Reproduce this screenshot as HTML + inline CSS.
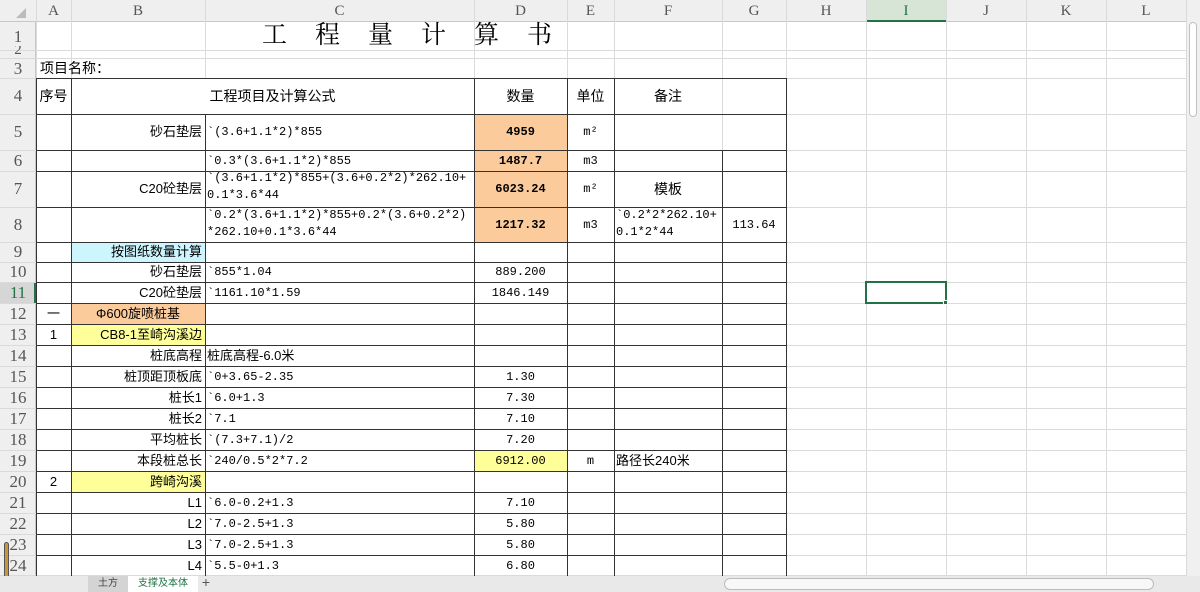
<!DOCTYPE html><html><head><meta charset="utf-8"><style>
body{margin:0;width:1200px;height:592px;overflow:hidden;background:#fff;position:relative;font-family:"Liberation Mono","Noto Sans CJK SC",monospace;font-size:12px;color:#000}
div{position:absolute;box-sizing:border-box}
.g{background:#dadada}.d{background:#333}
.t{white-space:nowrap;line-height:20px}
.cj{font-family:"Liberation Sans","Noto Sans CJK SC",sans-serif;font-size:13px}
.hd{font-family:"Liberation Serif","Noto Serif CJK SC",serif;font-size:15px;color:#555;text-align:center}
.r{text-align:right}.c{text-align:center}
b{font-weight:bold}
</style></head><body>
<div style="left:0;top:0;width:1186px;height:22px;background:#efefef;border-bottom:1px solid #c8c8c8"></div>
<div style="left:0;top:22px;width:36px;height:554px;background:#efefef;border-right:1px solid #c8c8c8"></div>
<div style="left:16px;top:8px;width:0;height:0;border-left:10px solid transparent;border-bottom:10px solid #bbb"></div>
<div style="left:866px;top:0;width:80px;height:22px;background:#d6e5d6;border-bottom:2px solid #217346"></div>
<div style="left:0;top:282px;width:36px;height:21px;background:#d6d6d6;border-right:2px solid #217346"></div>
<div style="left:474px;top:114px;width:93px;height:128px;background:#fbcb9c"></div>
<div style="left:71px;top:242px;width:134px;height:20px;background:#ccf5fd"></div>
<div style="left:71px;top:303px;width:134px;height:21px;background:#fbcb9c"></div>
<div style="left:71px;top:324px;width:134px;height:21px;background:#ffff99"></div>
<div style="left:474px;top:450px;width:93px;height:21px;background:#ffff99"></div>
<div style="left:71px;top:471px;width:134px;height:21px;background:#ffff99"></div>
<div class="g" style="left:36px;top:0;width:1px;height:576px"></div>
<div class="g" style="left:71px;top:0;width:1px;height:576px"></div>
<div class="g" style="left:205px;top:0;width:1px;height:78px"></div>
<div class="g" style="left:205px;top:114px;width:1px;height:462px"></div>
<div class="g" style="left:474px;top:0;width:1px;height:576px"></div>
<div class="g" style="left:567px;top:0;width:1px;height:576px"></div>
<div class="g" style="left:614px;top:0;width:1px;height:576px"></div>
<div class="g" style="left:722px;top:0;width:1px;height:576px"></div>
<div class="g" style="left:786px;top:0;width:1px;height:576px"></div>
<div class="g" style="left:866px;top:0;width:1px;height:576px"></div>
<div class="g" style="left:946px;top:0;width:1px;height:576px"></div>
<div class="g" style="left:1026px;top:0;width:1px;height:576px"></div>
<div class="g" style="left:1106px;top:0;width:1px;height:576px"></div>
<div class="g" style="left:1186px;top:0;width:1px;height:576px"></div>
<div class="g" style="left:0;top:50px;width:1186px;height:1px"></div>
<div class="g" style="left:0;top:58px;width:1186px;height:1px"></div>
<div class="g" style="left:0;top:78px;width:1186px;height:1px"></div>
<div class="g" style="left:0;top:114px;width:1186px;height:1px"></div>
<div class="g" style="left:0;top:150px;width:1186px;height:1px"></div>
<div class="g" style="left:0;top:171px;width:1186px;height:1px"></div>
<div class="g" style="left:0;top:207px;width:1186px;height:1px"></div>
<div class="g" style="left:0;top:242px;width:1186px;height:1px"></div>
<div class="g" style="left:0;top:262px;width:1186px;height:1px"></div>
<div class="g" style="left:0;top:282px;width:1186px;height:1px"></div>
<div class="g" style="left:0;top:303px;width:1186px;height:1px"></div>
<div class="g" style="left:0;top:324px;width:1186px;height:1px"></div>
<div class="g" style="left:0;top:345px;width:1186px;height:1px"></div>
<div class="g" style="left:0;top:366px;width:1186px;height:1px"></div>
<div class="g" style="left:0;top:387px;width:1186px;height:1px"></div>
<div class="g" style="left:0;top:408px;width:1186px;height:1px"></div>
<div class="g" style="left:0;top:429px;width:1186px;height:1px"></div>
<div class="g" style="left:0;top:450px;width:1186px;height:1px"></div>
<div class="g" style="left:0;top:471px;width:1186px;height:1px"></div>
<div class="g" style="left:0;top:492px;width:1186px;height:1px"></div>
<div class="g" style="left:0;top:513px;width:1186px;height:1px"></div>
<div class="g" style="left:0;top:534px;width:1186px;height:1px"></div>
<div class="g" style="left:0;top:555px;width:1186px;height:1px"></div>
<div class="g" style="left:0;top:575px;width:1186px;height:1px"></div>
<div class="d" style="left:36px;top:78px;width:750px;height:1px"></div>
<div class="d" style="left:36px;top:114px;width:750px;height:1px"></div>
<div class="d" style="left:36px;top:150px;width:750px;height:1px"></div>
<div class="d" style="left:36px;top:171px;width:750px;height:1px"></div>
<div class="d" style="left:36px;top:207px;width:750px;height:1px"></div>
<div class="d" style="left:36px;top:242px;width:750px;height:1px"></div>
<div class="d" style="left:36px;top:262px;width:750px;height:1px"></div>
<div class="d" style="left:36px;top:282px;width:750px;height:1px"></div>
<div class="d" style="left:36px;top:303px;width:750px;height:1px"></div>
<div class="d" style="left:36px;top:324px;width:750px;height:1px"></div>
<div class="d" style="left:36px;top:345px;width:750px;height:1px"></div>
<div class="d" style="left:36px;top:366px;width:750px;height:1px"></div>
<div class="d" style="left:36px;top:387px;width:750px;height:1px"></div>
<div class="d" style="left:36px;top:408px;width:750px;height:1px"></div>
<div class="d" style="left:36px;top:429px;width:750px;height:1px"></div>
<div class="d" style="left:36px;top:450px;width:750px;height:1px"></div>
<div class="d" style="left:36px;top:471px;width:750px;height:1px"></div>
<div class="d" style="left:36px;top:492px;width:750px;height:1px"></div>
<div class="d" style="left:36px;top:513px;width:750px;height:1px"></div>
<div class="d" style="left:36px;top:534px;width:750px;height:1px"></div>
<div class="d" style="left:36px;top:555px;width:750px;height:1px"></div>
<div class="d" style="left:71px;top:78px;width:1px;height:498px"></div>
<div class="d" style="left:205px;top:114px;width:1px;height:462px"></div>
<div class="d" style="left:474px;top:78px;width:1px;height:498px"></div>
<div class="d" style="left:567px;top:78px;width:1px;height:498px"></div>
<div class="d" style="left:614px;top:78px;width:1px;height:498px"></div>
<div class="d" style="left:722px;top:150px;width:1px;height:426px"></div>
<div class="d" style="left:786px;top:78px;width:1px;height:498px"></div>
<div class="d" style="left:36px;top:78px;width:1px;height:498px"></div>
<div class="t hd" style="left:36px;top:1px;width:35px">A</div>
<div class="t hd" style="left:71px;top:1px;width:134px">B</div>
<div class="t hd" style="left:205px;top:1px;width:269px">C</div>
<div class="t hd" style="left:474px;top:1px;width:93px">D</div>
<div class="t hd" style="left:567px;top:1px;width:47px">E</div>
<div class="t hd" style="left:614px;top:1px;width:108px">F</div>
<div class="t hd" style="left:722px;top:1px;width:64px">G</div>
<div class="t hd" style="left:786px;top:1px;width:80px">H</div>
<div class="t hd" style="left:866px;top:1px;width:80px;color:#217346">I</div>
<div class="t hd" style="left:946px;top:1px;width:80px">J</div>
<div class="t hd" style="left:1026px;top:1px;width:80px">K</div>
<div class="t hd" style="left:1106px;top:1px;width:80px">L</div>
<div class="t hd" style="left:0;top:27px;width:36px;font-size:17px">1</div>
<div class="t hd" style="left:0;top:46px;width:36px;height:12px;overflow:hidden;line-height:8px">2</div>
<div class="t hd" style="left:0;top:59px;width:36px;font-size:17px">3</div>
<div class="t hd" style="left:0;top:86px;width:36px;font-size:17px">4</div>
<div class="t hd" style="left:0;top:122px;width:36px;font-size:17px">5</div>
<div class="t hd" style="left:0;top:151px;width:36px;font-size:17px">6</div>
<div class="t hd" style="left:0;top:179px;width:36px;font-size:17px">7</div>
<div class="t hd" style="left:0;top:215px;width:36px;font-size:17px">8</div>
<div class="t hd" style="left:0;top:242px;width:36px;font-size:17px">9</div>
<div class="t hd" style="left:0;top:262px;width:36px;font-size:17px">10</div>
<div class="t hd" style="left:0;top:283px;width:36px;font-size:17px;color:#217346">11</div>
<div class="t hd" style="left:0;top:304px;width:36px;font-size:17px">12</div>
<div class="t hd" style="left:0;top:325px;width:36px;font-size:17px">13</div>
<div class="t hd" style="left:0;top:346px;width:36px;font-size:17px">14</div>
<div class="t hd" style="left:0;top:367px;width:36px;font-size:17px">15</div>
<div class="t hd" style="left:0;top:388px;width:36px;font-size:17px">16</div>
<div class="t hd" style="left:0;top:409px;width:36px;font-size:17px">17</div>
<div class="t hd" style="left:0;top:430px;width:36px;font-size:17px">18</div>
<div class="t hd" style="left:0;top:451px;width:36px;font-size:17px">19</div>
<div class="t hd" style="left:0;top:472px;width:36px;font-size:17px">20</div>
<div class="t hd" style="left:0;top:493px;width:36px;font-size:17px">21</div>
<div class="t hd" style="left:0;top:514px;width:36px;font-size:17px">22</div>
<div class="t hd" style="left:0;top:535px;width:36px;font-size:17px">23</div>
<div class="t hd" style="left:0;top:556px;width:36px;font-size:17px">24</div>
<div style="left:4px;top:542px;width:5px;height:36px;background:#c8963c;border:1px solid #555;border-radius:3px"></div>
<div class="t" style="left:262px;top:22px;height:28px;line-height:28px;font-family:'Liberation Serif','Noto Serif CJK SC',serif;font-size:25px;letter-spacing:28px">工程量计算书</div>
<div class="t cj" style="left:40px;top:58px;font-size:14px">项目名称：</div>
<div class="t cj c" style="left:36px;top:86px;width:35px;font-size:14px">序号</div>
<div class="t cj c" style="left:71px;top:86px;width:403px;font-size:14px">工程项目及计算公式</div>
<div class="t cj c" style="left:474px;top:86px;width:93px;font-size:14px">数量</div>
<div class="t cj c" style="left:567px;top:86px;width:47px;font-size:14px">单位</div>
<div class="t cj c" style="left:614px;top:86px;width:108px;font-size:14px">备注</div>
<div class="t cj r" style="left:71px;top:122px;width:131px">砂石垫层</div>
<div class="t" style="left:207px;top:122px">`(3.6+1.1*2)*855</div>
<div class="t c" style="left:474px;top:122px;width:93px"><b>4959</b></div>
<div class="t c" style="left:567px;top:122px;width:47px">m²</div>
<div class="t" style="left:207px;top:151px">`0.3*(3.6+1.1*2)*855</div>
<div class="t c" style="left:474px;top:151px;width:93px"><b>1487.7</b></div>
<div class="t c" style="left:567px;top:151px;width:47px">m3</div>
<div class="t cj r" style="left:71px;top:179px;width:131px">C20砼垫层</div>
<div class="t" style="left:207px;top:170px;line-height:17px">`(3.6+1.1*2)*855+(3.6+0.2*2)*262.10+<br>0.1*3.6*44</div>
<div class="t c" style="left:474px;top:179px;width:93px"><b>6023.24</b></div>
<div class="t c" style="left:567px;top:179px;width:47px">m²</div>
<div class="t cj c" style="left:614px;top:179px;width:108px;font-size:14px">模板</div>
<div class="t" style="left:207px;top:207px;line-height:17px">`0.2*(3.6+1.1*2)*855+0.2*(3.6+0.2*2)<br>*262.10+0.1*3.6*44</div>
<div class="t c" style="left:474px;top:215px;width:93px"><b>1217.32</b></div>
<div class="t c" style="left:567px;top:215px;width:47px">m3</div>
<div class="t" style="left:616px;top:207px;line-height:17px">`0.2*2*262.10+<br>0.1*2*44</div>
<div class="t c" style="left:722px;top:215px;width:64px">113.64</div>
<div class="t cj r" style="left:71px;top:242px;width:131px">按图纸数量计算</div>
<div class="t cj r" style="left:71px;top:262px;width:131px">砂石垫层</div>
<div class="t" style="left:207px;top:262px">`855*1.04</div>
<div class="t c" style="left:474px;top:262px;width:93px">889.200</div>
<div class="t cj r" style="left:71px;top:283px;width:131px">C20砼垫层</div>
<div class="t" style="left:207px;top:283px">`1161.10*1.59</div>
<div class="t c" style="left:474px;top:283px;width:93px">1846.149</div>
<div class="t cj c" style="left:36px;top:304px;width:35px">一</div>
<div class="t cj c" style="left:71px;top:304px;width:134px">Φ600旋喷桩基</div>
<div class="t cj c" style="left:36px;top:325px;width:35px">1</div>
<div class="t cj r" style="left:71px;top:325px;width:131px">CB8-1至崎沟溪边</div>
<div class="t cj r" style="left:71px;top:346px;width:131px">桩底高程</div>
<div class="t cj" style="left:207px;top:346px">桩底高程-6.0米</div>
<div class="t cj r" style="left:71px;top:367px;width:131px">桩顶距顶板底</div>
<div class="t" style="left:207px;top:367px">`0+3.65-2.35</div>
<div class="t c" style="left:474px;top:367px;width:93px">1.30</div>
<div class="t cj r" style="left:71px;top:388px;width:131px">桩长1</div>
<div class="t" style="left:207px;top:388px">`6.0+1.3</div>
<div class="t c" style="left:474px;top:388px;width:93px">7.30</div>
<div class="t cj r" style="left:71px;top:409px;width:131px">桩长2</div>
<div class="t" style="left:207px;top:409px">`7.1</div>
<div class="t c" style="left:474px;top:409px;width:93px">7.10</div>
<div class="t cj r" style="left:71px;top:430px;width:131px">平均桩长</div>
<div class="t" style="left:207px;top:430px">`(7.3+7.1)/2</div>
<div class="t c" style="left:474px;top:430px;width:93px">7.20</div>
<div class="t cj r" style="left:71px;top:451px;width:131px">本段桩总长</div>
<div class="t" style="left:207px;top:451px">`240/0.5*2*7.2</div>
<div class="t c" style="left:474px;top:451px;width:93px">6912.00</div>
<div class="t c" style="left:567px;top:451px;width:47px">m</div>
<div class="t cj" style="left:616px;top:451px">路径长240米</div>
<div class="t cj c" style="left:36px;top:472px;width:35px">2</div>
<div class="t cj r" style="left:71px;top:472px;width:131px">跨崎沟溪</div>
<div class="t cj r" style="left:71px;top:493px;width:131px">L1</div>
<div class="t" style="left:207px;top:493px">`6.0-0.2+1.3</div>
<div class="t c" style="left:474px;top:493px;width:93px">7.10</div>
<div class="t cj r" style="left:71px;top:514px;width:131px">L2</div>
<div class="t" style="left:207px;top:514px">`7.0-2.5+1.3</div>
<div class="t c" style="left:474px;top:514px;width:93px">5.80</div>
<div class="t cj r" style="left:71px;top:535px;width:131px">L3</div>
<div class="t" style="left:207px;top:535px">`7.0-2.5+1.3</div>
<div class="t c" style="left:474px;top:535px;width:93px">5.80</div>
<div class="t cj r" style="left:71px;top:556px;width:131px">L4</div>
<div class="t" style="left:207px;top:556px">`5.5-0+1.3</div>
<div class="t c" style="left:474px;top:556px;width:93px">6.80</div>
<div style="left:865px;top:281px;width:82px;height:23px;border:2px solid #217346"></div>
<div style="left:943px;top:300px;width:5px;height:5px;background:#217346;border:1px solid #fff"></div>
<div style="left:1187px;top:0;width:13px;height:576px;background:#f0f0f0"></div>
<div style="left:1189px;top:22px;width:8px;height:95px;background:#fff;border:1px solid #c0c0c0;border-radius:4px"></div>
<div style="left:0;top:576px;width:1200px;height:16px;background:#e9e9e9"></div>
<div class="t cj c" style="left:88px;top:576px;width:40px;height:16px;line-height:16px;font-size:10px;background:#d4d4d4;color:#444">土方</div>
<div class="t cj c" style="left:128px;top:576px;width:70px;height:16px;line-height:16px;font-size:10px;background:#fff;color:#217346">支撑及本体</div>
<div class="t c" style="left:200px;top:576px;width:12px;height:16px;line-height:16px;font-size:14px;color:#555">+</div>
<div style="left:724px;top:578px;width:430px;height:12px;background:#f8f8f8;border:1px solid #bbb;border-radius:6px"></div>
</body></html>
